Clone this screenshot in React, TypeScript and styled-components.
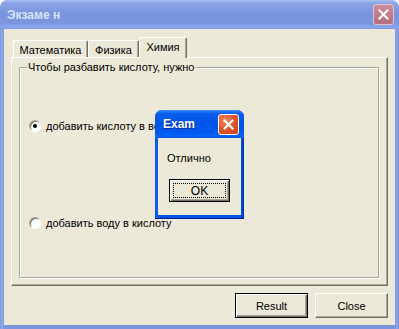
import React from 'react';
import styled, { createGlobalStyle, css } from 'styled-components';

const GlobalStyle = createGlobalStyle`
  html, body {
    margin: 0;
    padding: 0;
    background: #ffffff;
  }
  body {
    font-family: "Liberation Sans", Arial, sans-serif;
    font-size: 11px;
    color: #000;
  }
`;

const Window = styled.div`
  position: relative;
  width: 399px;
  height: 329px;
  display: flex;
  flex-direction: column;
  box-sizing: border-box;
  border-radius: 8px 8px 0 0;
  background: linear-gradient(90deg, #7b96df 0, #93abe8 2px, #7b96df 4px, #7b96df calc(100% - 4px), #93abe8 calc(100% - 2px), #6f89d6 100%);
  overflow: hidden;
`;

const TitleBar = styled.div<{ $active?: boolean }>`
  flex: none;
  height: ${({ $active }) => ($active ? 28 : 29)}px;
  display: flex;
  align-items: center;
  justify-content: space-between;
  padding: 0 5px 0 7px;
  box-sizing: border-box;
  ${({ $active }) =>
    $active
      ? css`
          background: linear-gradient(#3d8dfd 0%, #0a5fef 12%, #0055e8 45%, #0058ee 80%, #0366f8 94%, #0a4fd8 100%);
          padding: 0 5px 0 8px;
        `
      : css`
          background: linear-gradient(#a9c0f0 0%, #8aa5e6 12%, #7a95df 45%, #7b96df 80%, #89a6ec 94%, #7e98dd 100%);
        `}
`;

const TitleText = styled.span<{ $active?: boolean }>`
  font-family: "Liberation Sans", Arial, sans-serif;
  font-weight: bold;
  font-size: 12px;
  color: ${({ $active }) => ($active ? '#ffffff' : '#d8e4f8')};
  text-shadow: ${({ $active }) => ($active ? '1px 1px 0 #0a2b9a' : 'none')};
  white-space: pre;
`;

const CloseButton = styled.div<{ $active?: boolean }>`
  width: 21px;
  height: 21px;
  box-sizing: border-box;
  border-radius: 3px;
  display: flex;
  align-items: center;
  justify-content: center;
  ${({ $active }) =>
    $active
      ? css`
          border: 1px solid #ffffff;
          background: radial-gradient(circle at 35% 30%, #f08a68 0%, #e0552f 50%, #c8401d 100%);
        `
      : css`
          border: 1px solid #e3c3cb;
          background: linear-gradient(#cf8e9c, #bf7888 60%, #b66f80);
        `}
`;

const Body = styled.div`
  flex: 1;
  margin: 0 4px 4px;
  background: #ece9d8;
  display: flex;
  flex-direction: column;
  padding: 8px 7px 7px;
  box-sizing: border-box;
`;

const TabStrip = styled.div`
  display: flex;
  align-items: flex-end;
  height: 20px;
  padding-left: 2px;
  position: relative;
  z-index: 1;
`;

const Tab = styled.div<{ $selected?: boolean; $width: number }>`
  width: ${({ $width }) => $width}px;
  box-sizing: border-box;
  height: ${({ $selected }) => ($selected ? 21 : 17)}px;
  margin-bottom: ${({ $selected }) => ($selected ? -1 : 0)}px;
  border-top: 1px solid #ffffff;
  border-left: 1px solid #ffffff;
  border-right: 1px solid #716f64;
  box-shadow: inset -1px 0 0 #aca899;
  border-radius: 2px 2px 0 0;
  background: #ece9d8;
  display: flex;
  align-items: center;
  justify-content: center;
  padding-top: ${({ $selected }) => ($selected ? 0 : 1)}px;
  padding-bottom: ${({ $selected }) => ($selected ? 2 : 0)}px;
`;

const TabPanel = styled.div`
  height: 229px;
  box-sizing: border-box;
  border-top: 1px solid #ffffff;
  border-left: 1px solid #ffffff;
  border-right: 1px solid #716f64;
  border-bottom: 1px solid #716f64;
  box-shadow: inset -1px -1px 0 #aca899;
  padding: 3px 8px 7px 7px;
  display: flex;
`;

const GroupBox = styled.fieldset`
  flex: 1;
  margin: 0;
  padding: 0 0 0 7px;
  border: 1px solid #aca899;
  box-shadow: inset 1px 1px 0 #ffffff, 1px 1px 0 #ffffff;
  min-width: 0;
`;

const Caption = styled.legend`
  padding: 0 1px;
  line-height: 13px;
  margin-left: 0;
  background: #ece9d8;
`;

const RadioList = styled.div`
  display: flex;
  flex-direction: column;
  gap: 84px;
  margin-top: 45px;
`;

const RadioRow = styled.label`
  display: flex;
  align-items: center;
  height: 13px;
  gap: 5px;
  padding-left: 2px;
  white-space: nowrap;
`;

const RadioCircle = styled.span<{ $checked?: boolean }>`
  width: 12px;
  height: 12px;
  box-sizing: border-box;
  border-radius: 50%;
  border: 1px solid;
  border-color: #aca899 #ffffff #ffffff #aca899;
  background: #ffffff;
  box-shadow: inset 1px 1px 0 #716f64;
  display: flex;
  align-items: center;
  justify-content: center;
  &::after {
    content: '';
    width: 4px;
    height: 4px;
    border-radius: 50%;
    background: ${({ $checked }) => ($checked ? '#000' : 'transparent')};
  }
`;

const Footer = styled.div`
  display: flex;
  justify-content: flex-end;
  gap: 7px;
  margin-top: 7px;
`;

const Button = styled.div<{ $default?: boolean; $width: number; $height?: number }>`
  width: ${({ $width }) => $width}px;
  height: ${({ $height }) => $height ?? 25}px;
  box-sizing: border-box;
  background: #ece9d8;
  display: flex;
  align-items: center;
  justify-content: center;
  font-size: 11px;
  border: 1px solid;
  border-color: #ffffff #716f64 #716f64 #ffffff;
  box-shadow: inset -1px -1px 0 #aca899;
  ${({ $default }) =>
    $default &&
    css`
      border: 1px solid #000;
      box-shadow: inset 1px 1px 0 #fff, inset -1px -1px 0 #716f64, inset -2px -2px 0 #aca899;
    `}
`;

const FocusLabel = styled.span`
  border: 1px dotted #000;
  align-self: stretch;
  flex: 1;
  margin: 3px;
  display: flex;
  align-items: center;
  justify-content: center;
  font-size: 12px;
`;

const MessageBox = styled.div`
  position: absolute;
  left: 155px;
  top: 110px;
  width: 89px;
  height: 108px;
  display: flex;
  flex-direction: column;
  border-radius: 7px 7px 0 0;
  overflow: hidden;
  background: linear-gradient(90deg, #0831d9 0, #166aee 1px, #0054e3 3px, #0054e3 calc(100% - 3px), #0041cc calc(100% - 1px), #001ea0 100%);
  box-shadow: 0 1px 0 #001ea0;
`;

const MessageBody = styled.div`
  flex: 1;
  margin: 0 3px 3px;
  background: #ece9d8;
  display: flex;
  flex-direction: column;
  align-items: center;
  padding-top: 14px;
`;

const MessageText = styled.div`
  align-self: flex-start;
  padding-left: 9px;
  font-size: 11px;
  line-height: 13px;
`;

const MessageButtons = styled.div`
  margin-top: 14px;
`;

const CrossIcon = () => (
  <svg width="11" height="11" viewBox="0 0 11 11">
    <path d="M1.5 1.5 L9.5 9.5 M9.5 1.5 L1.5 9.5" stroke="#fff" strokeWidth="2" strokeLinecap="square" />
  </svg>
);

const App: React.FC = () => (
  <>
    <GlobalStyle />
    <Window>
      <TitleBar>
        <TitleText>Экзаме н</TitleText>
        <CloseButton>
          <CrossIcon />
        </CloseButton>
      </TitleBar>
      <Body>
        <TabStrip>
          <Tab $width={75}>Математика</Tab>
          <Tab $width={51}>Физика</Tab>
          <Tab $width={48} $selected>Химия</Tab>
        </TabStrip>
        <TabPanel>
          <GroupBox>
            <Caption>Чтобы разбавить кислоту, нужно</Caption>
            <RadioList>
              <RadioRow>
                <RadioCircle $checked />
                добавить кислоту в воду
              </RadioRow>
              <RadioRow>
                <RadioCircle />
                добавить воду в кислоту
              </RadioRow>
            </RadioList>
          </GroupBox>
        </TabPanel>
        <Footer>
          <Button $width={73} $default>Result</Button>
          <Button $width={73}>Close</Button>
        </Footer>
      </Body>

      <MessageBox>
        <TitleBar $active>
          <TitleText $active>Exam</TitleText>
          <CloseButton $active>
            <CrossIcon />
          </CloseButton>
        </TitleBar>
        <MessageBody>
          <MessageText>Отлично</MessageText>
          <MessageButtons>
            <Button $width={61} $height={23} $default>
              <FocusLabel>OK</FocusLabel>
            </Button>
          </MessageButtons>
        </MessageBody>
      </MessageBox>
    </Window>
  </>
);

export default App;
